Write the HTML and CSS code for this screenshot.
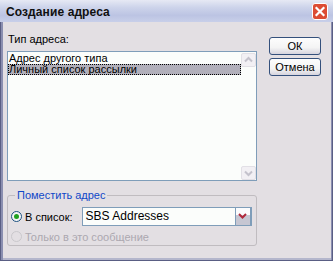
FILE: index.html
```html
<!DOCTYPE html>
<html lang="ru">
<head>
<meta charset="utf-8">
<title>Создание адреса</title>
<link rel="stylesheet" href="styles.css">
</head>
<body>
<div class="window">
  <div class="titlebar">
    <span class="title">Создание адреса</span>
    <span class="close">
      <svg width="16" height="17" viewBox="0 0 16 17"><path d="M4.5 5 L11.5 12 M11.5 5 L4.5 12" stroke="#fff" stroke-width="2.2" stroke-linecap="square"/></svg>
    </span>
  </div>
  <div class="client">
    <div class="left">
      <div class="label">Тип адреса:</div>
      <div class="listbox">
        <div class="items">
          <div class="item">Адрес другого типа</div>
          <div class="item selected">Личный список рассылки</div>
        </div>
        <div class="scrollbar">
          <div class="sbtn"><svg width="15" height="14" viewBox="0 0 15 14"><path d="M4 8.5 L7.5 5 L11 8.5" stroke="#c4c2cc" stroke-width="2" fill="none"/></svg></div>
          <div class="track"></div>
          <div class="sbtn"><svg width="15" height="14" viewBox="0 0 15 14"><path d="M4 5.5 L7.5 9 L11 5.5" stroke="#c4c2cc" stroke-width="2" fill="none"/></svg></div>
        </div>
      </div>
      <fieldset class="group">
        <legend>Поместить адрес</legend>
        <div class="row">
          <span class="radio checked"><span class="dot"></span></span>
          <span class="rlabel">В список:</span>
          <div class="combo">
            <span class="ctext">SBS Addresses</span>
            <span class="cbtn"><svg width="9" height="6" viewBox="0 0 9 6"><path d="M1 1 L4.5 4.5 L8 1" stroke="#b0283c" stroke-width="2" fill="none"/></svg></span>
          </div>
        </div>
        <div class="row disabled">
          <span class="radio"></span>
          <span class="rlabel">Только в это сообщение</span>
        </div>
      </fieldset>
    </div>
    <div class="right">
      <button class="btn">ОК</button>
      <button class="btn">Отмена</button>
    </div>
  </div>
</div>
</body>
</html>
```
FILE: styles.css
```css
* { box-sizing: border-box; }
html, body { margin: 0; padding: 0; }
body {
  width: 333px;
  height: 261px;
  overflow: hidden;
  font-family: "Liberation Sans", Arial, sans-serif;
  font-size: 11px;
  color: #000;
}
.window {
  width: 333px;
  height: 261px;
  display: flex;
  flex-direction: column;
  background: #8a8eb0;
  border-left: 1px solid #5a5e84;
  border-right: 1px solid #5a5e84;
  border-bottom: 1px solid #5a5e84;
}
.titlebar {
  height: 22px;
  flex: none;
  display: flex;
  align-items: center;
  justify-content: space-between;
  padding: 0 5px 0 5px;
  background: linear-gradient(#e6e9f4 0%, #ccd3ea 35%, #bcc4e3 70%, #c8cfe9 100%);
  margin: 0 -1px;
}
.title {
  font-weight: bold;
  font-size: 12px;
  color: #101010;
  padding-top: 2px;
  padding-left: 1px;
  letter-spacing: 0.1px;
}
.close {
  width: 16px;
  height: 17px;
  background: #dc4c34;
  border: 1px solid #ffffff;
  border-radius: 3px;
  display: flex;
  margin-top: 1px;
}
.close svg { display: block; margin: -1px; }
.client {
  flex: 1;
  margin: 0 1px 0 2px;
  border-bottom: 2px solid #b4b6cc;
  background: #e3dfe3;
  display: flex;
  padding: 11px 0 0 4px;
}
.left {
  width: 250px;
  display: flex;
  flex-direction: column;
}
.label {
  height: 13px;
  line-height: 13px;
  padding-left: 1px;
  margin-bottom: 5px;
}
.listbox {
  height: 130px;
  border: 1px solid #7f9db9;
  background: #fbfdfb;
  display: flex;
}
.items {
  flex: 1;
  padding-top: 1px;
}
.item {
  height: 11px;
  line-height: 11px;
  padding-left: 1px;
  white-space: nowrap;
}
.item.selected {
  background: #b1afba;
  outline: 1px dotted #000;
  outline-offset: -1px;
}
.scrollbar {
  width: 15px;
  display: flex;
  flex-direction: column;
  padding-top: 1px;
}
.sbtn {
  width: 15px;
  height: 14px;
  background: #f2f0f4;
  border: 1px solid #e2e0e6;
  border-radius: 2px;
  display: flex;
}
.sbtn svg { display: block; margin: -1px; }
.track { flex: 1; }
.group {
  margin: 9px 0 0 0;
  padding: 6px 4px 6px 3px;
  border: 1px solid #c0bcc0;
  border-radius: 3px;
  height: 56px;
}
legend {
  color: #1048c8;
  padding: 0 2px 0 2px;
  margin-left: 4px;
  line-height: 11px;
}
.row {
  display: flex;
  align-items: center;
  height: 19px;
}
.row.disabled {
  height: 13px;
  margin-top: 4px;
  color: #aca8b0;
}
.radio {
  width: 11px;
  height: 11px;
  border-radius: 50%;
  border: 1px solid #1c5180;
  background: #f4f4f6;
  display: flex;
  align-items: center;
  justify-content: center;
  flex: none;
}
.row.disabled .radio { border-color: #cac8cc; background: transparent; }
.dot {
  width: 5px;
  height: 5px;
  border-radius: 50%;
  background: #21a121;
}
.rlabel { margin-left: 3px; white-space: nowrap; }
.combo {
  margin-left: 9px;
  width: 170px;
  height: 19px;
  background: #fbfdfb;
  border: 1px solid #7f9db9;
  border-right-width: 2px;
  display: flex;
  font-size: 12px;
}
.ctext { flex: 1; padding-left: 3px; line-height: 17px; }
.cbtn {
  width: 15px;
  border-left: 1px solid #7f9db9;
  background: linear-gradient(#fbfbfd 0%, #fbfbfd 40%, #c6c6d2 40%, #c6c6d2 100%);
  display: flex;
  justify-content: center;
  padding-top: 5px;
}
.cbtn svg { display: block; }
.right {
  margin-left: 12px;
  padding-top: 4px;
  display: flex;
  flex-direction: column;
  gap: 3px;
}
.btn {
  width: 52px;
  height: 18px;
  padding: 0;
  margin: 0;
  font-family: "Liberation Sans", Arial, sans-serif;
  font-size: 11px;
  color: #000;
  border: 1px solid #34507c;
  border-radius: 3px;
  background: linear-gradient(#fdfdfd 0%, #f4f4f4 60%, #d6d4de 100%);
  line-height: 16px;
}
```
